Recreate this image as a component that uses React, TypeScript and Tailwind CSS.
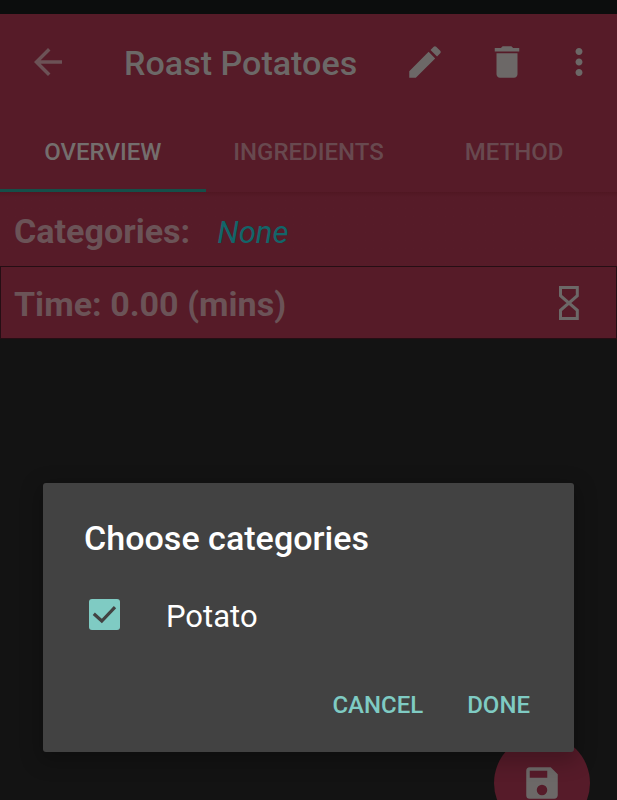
import type { ReactNode } from 'react';

function Icon({ d, className = '' }: { d: string; className?: string }) {
  return (
    <svg viewBox="0 0 24 24" className={`h-[42px] w-[42px] shrink-0 fill-current ${className}`}>
      <path fillRule="evenodd" d={d} />
    </svg>
  );
}

function Tab({ active = false, children }: { active?: boolean; children: ReactNode }) {
  return (
    <div
      className={`flex h-full flex-1 items-center justify-center border-b-[3px] pt-[4px] text-[24px] font-medium ${
        active ? 'border-[#154f49] text-[#746e6d]' : 'border-transparent text-[#68494f]'
      }`}
    >
      {children}
    </div>
  );
}

export default function App() {
  return (
    <div className="relative h-[800px] w-[617px] overflow-hidden bg-[#131313] font-[Roboto,sans-serif]">
      <div className="h-[14px] bg-[#0c0d0d]" />
      <header className="bg-[#561b28]">
        <div className="flex h-[97px] items-center pb-px pl-[27px] text-[#6c6867]">
          <Icon className="text-[#6c5256]" d="M20 11H7.83l5.59-5.59L12 4l-8 8 8 8 1.41-1.41L7.83 13H20v-2z" />
          <h1 className="ml-[55px] w-[280px] pt-[3px] text-[34.1px] leading-none font-medium whitespace-nowrap">
            Roast Potatoes
          </h1>
          <Icon d="M3 17.25V21h3.75L17.81 9.94l-3.75-3.75L3 17.25zM20.71 7.04a.996.996 0 0 0 0-1.41l-2.34-2.34a.996.996 0 0 0-1.41 0l-1.83 1.83 3.75 3.75 1.83-1.83z" />
          <Icon className="ml-[40px]" d="M6 19c0 1.1.9 2 2 2h8c1.100 0 2-.9 2-2V7H6v12zM19 4h-3.500l-1-1h-5l-1 1H5v2h14V4z" />
          <Icon className="ml-[30px]" d="M12 8c1.100 0 2-.9 2-2s-.9-2-2-2-2 .9-2 2 .9 2 2 2zm0 2c-1.100 0-2 .9-2 2s.9 2 2 2 2-.9 2-2-.9-2-2-2zm0 6c-1.100 0-2 .9-2 2s.9 2 2 2 2-.9 2-2-.9-2-2-2z" />
        </div>
        <nav className="flex h-[81px]">
          <Tab active>OVERVIEW</Tab>
          <Tab>INGREDIENTS</Tab>
          <Tab>METHOD</Tab>
        </nav>
      </header>
      <main>
        <section className="flex h-[74px] items-center bg-[#561b28] bg-linear-to-b from-[#501722] to-[#561b28] to-[5px] pt-[5px] pl-[14px]">
          <span className="text-[34.1px] font-bold text-[#6b5357]">Categories:</span>
          <span className="mt-[3px] ml-[27px] text-[31px] text-[#126569] italic">None</span>
        </section>
        <section className="flex h-[73px] items-center justify-between border border-[#250e14] bg-[#561b28] pr-[26px] pl-[13px]">
          <span className="pt-[4px] text-[34.1px] font-bold text-[#6b5357]">Time: 0.00 (mins)</span>
          <svg viewBox="0 0 42 42" className="h-[42px] w-[42px] shrink-0" fill="none" stroke="#6c6867" strokeWidth="3">
            <path d="M12.500 5.500h16.800v8.200L20.900 21l8.400 7.300v8.200H12.500v-8.200l8.400-7.300-8.400-7.300z" />
          </svg>
        </section>
      </main>

      <button className="absolute top-[735px] left-[494px] flex h-24 w-24 items-center justify-center rounded-full bg-[#561b29] text-[#6c6867]">
        <Icon d="M17 3H5a2 2 0 0 0-2 2v14a2 2 0 0 0 2 2h14c1.100 0 2-.9 2-2V7l-4-4zm-5 16a3 3 0 1 1 0-6 3 3 0 0 1 0 6zm3-10H5V5h10v4z" />
      </button>

      <div
        role="dialog"
        className="absolute top-[483px] left-[43px] flex h-[269px] w-[531px] flex-col rounded-[3px] bg-[#424242] pt-[35px] pl-[41px] shadow-[0_6px_20px_4px_rgba(0,0,0,0.22)]"
      >
        <h2 className="text-[34.1px] leading-[40px] font-medium text-white">Choose categories</h2>
        <label className="mt-[35px] flex h-[42px] items-center">
          <svg viewBox="0 0 31 31" className="ml-[5px] h-[31px] w-[31px]">
            <rect width="31" height="31" rx="3" fill="#7fcbc3" />
            <path d="m4.800 14.700 8 7.300L26 8.200" fill="none" stroke="#424242" strokeWidth="3.200" />
          </svg>
          <span className="mt-[5px] ml-[46px] text-[31px] leading-[36px] text-white">Potato</span>
        </label>
        <div className="mt-[50px] flex justify-end gap-[44px] pr-[44px] text-[24px] leading-[40px] font-medium text-[#7fcbc3]">
          <button>CANCEL</button>
          <button>DONE</button>
        </div>
      </div>
    </div>
  );
}
